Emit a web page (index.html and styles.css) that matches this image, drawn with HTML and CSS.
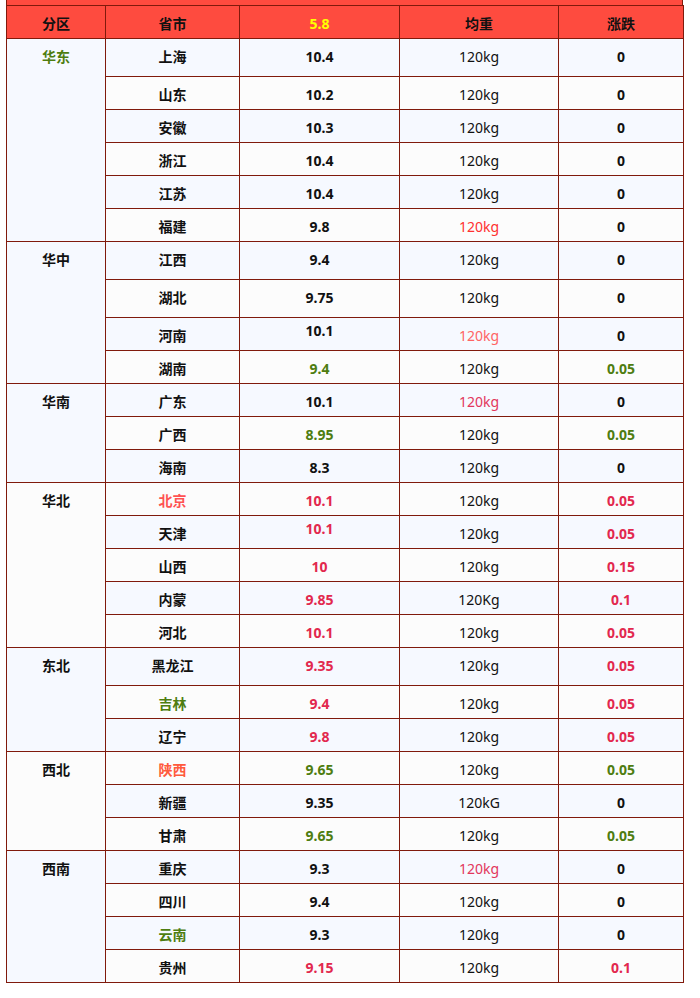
FILE: index.html
```html
<!DOCTYPE html>
<html lang="zh">
<head>
<meta charset="utf-8">
<title>价格表</title>
<link rel="stylesheet" href="styles.css">
</head>
<body>
<div class="wrap">
  <div class="top-band"></div>
  <table class="price">
    <colgroup>
      <col class="c1"><col class="c2"><col class="c3"><col class="c4"><col class="c5">
    </colgroup>
    <thead>
      <tr class="head">
        <th>分区</th><th>省市</th><th class="yellow">5.8</th><th>均重</th><th>涨跌</th>
      </tr>
    </thead>
    <tbody>
      <tr class="tall"><td class="region green" rowspan="6">华东</td><td>上海</td><td>10.4</td><td class="w">120kg</td><td>0</td></tr>
      <tr><td>山东</td><td>10.2</td><td class="w">120kg</td><td>0</td></tr>
      <tr><td>安徽</td><td>10.3</td><td class="w">120kg</td><td>0</td></tr>
      <tr><td>浙江</td><td>10.4</td><td class="w">120kg</td><td>0</td></tr>
      <tr><td>江苏</td><td>10.4</td><td class="w">120kg</td><td>0</td></tr>
      <tr><td>福建</td><td>9.8</td><td class="w red-kg">120kg</td><td>0</td></tr>

      <tr class="tall"><td class="region" rowspan="4">华中</td><td>江西</td><td>9.4</td><td class="w">120kg</td><td>0</td></tr>
      <tr class="tall"><td>湖北</td><td>9.75</td><td class="w">120kg</td><td>0</td></tr>
      <tr><td>河南</td><td class="up">10.1</td><td class="w salmon">120kg</td><td>0</td></tr>
      <tr><td>湖南</td><td class="green">9.4</td><td class="w">120kg</td><td class="green">0.05</td></tr>

      <tr><td class="region" rowspan="3">华南</td><td>广东</td><td>10.1</td><td class="w pink">120kg</td><td>0</td></tr>
      <tr><td>广西</td><td class="green">8.95</td><td class="w">120kg</td><td class="green">0.05</td></tr>
      <tr><td>海南</td><td>8.3</td><td class="w">120kg</td><td>0</td></tr>

      <tr><td class="region" rowspan="5">华北</td><td class="salmon">北京</td><td class="crimson">10.1</td><td class="w">120kg</td><td class="crimson">0.05</td></tr>
      <tr><td>天津</td><td class="crimson up">10.1</td><td class="w">120kg</td><td class="crimson">0.05</td></tr>
      <tr><td>山西</td><td class="crimson">10</td><td class="w">120kg</td><td class="crimson">0.15</td></tr>
      <tr><td>内蒙</td><td class="crimson">9.85</td><td class="w">120Kg</td><td class="crimson">0.1</td></tr>
      <tr><td>河北</td><td class="crimson">10.1</td><td class="w">120kg</td><td class="crimson">0.05</td></tr>

      <tr class="tall"><td class="region" rowspan="3">东北</td><td>黑龙江</td><td class="crimson">9.35</td><td class="w">120kg</td><td class="crimson">0.05</td></tr>
      <tr><td class="green">吉林</td><td class="crimson">9.4</td><td class="w">120kg</td><td class="crimson">0.05</td></tr>
      <tr><td>辽宁</td><td class="crimson">9.8</td><td class="w">120kg</td><td class="crimson">0.05</td></tr>

      <tr><td class="region" rowspan="3">西北</td><td class="orange">陕西</td><td class="green">9.65</td><td class="w">120kg</td><td class="green">0.05</td></tr>
      <tr><td>新疆</td><td>9.35</td><td class="w">120kG</td><td>0</td></tr>
      <tr><td>甘肃</td><td class="green">9.65</td><td class="w">120kg</td><td class="green">0.05</td></tr>

      <tr><td class="region" rowspan="4">西南</td><td>重庆</td><td>9.3</td><td class="w pink">120kg</td><td>0</td></tr>
      <tr><td>四川</td><td>9.4</td><td class="w">120kg</td><td>0</td></tr>
      <tr><td class="green">云南</td><td>9.3</td><td class="w">120kg</td><td>0</td></tr>
      <tr><td>贵州</td><td class="crimson">9.15</td><td class="w">120kg</td><td class="crimson">0.1</td></tr>
    </tbody>
  </table>
</div>
</body>
</html>
```

FILE: styles.css
```css
html, body {
  margin: 0;
  padding: 0;
  background: #ffffff;
}

.wrap {
  padding-left: 6px;
  font-family: "Noto Sans", "Noto Sans CJK SC", sans-serif;
}

.top-band {
  width: 675px;
  height: 5px;
  background: #fe4b3f;
  border-left: 1px solid #801a0c;
  border-right: 1px solid #801a0c;
}

.price {
  width: 677px;
  border-collapse: collapse;
  table-layout: fixed;
  font-size: 14px;
  color: #111111;
}

.c1 { width: 99px; }
.c2 { width: 134px; }
.c3 { width: 160px; }
.c4 { width: 159px; }
.c5 { width: 125px; }

.price th,
.price td {
  border: 1px solid #801a0c;
  text-align: center;
  vertical-align: top;
  padding: 8px 0 0;
  line-height: 20px;
  font-weight: 700;
}

.price tr {
  height: 33px;
}

.price tr.tall {
  height: 38px;
}

.head {
  background: #fe4b3f;
}

.head th {
  color: #111111;
}

.head th.yellow {
  color: #ffff00;
}

.price tbody tr:nth-child(odd) {
  background: #f6f9ff;
}

.price tbody tr:nth-child(even) {
  background: #fcfcfc;
}

.price td.w {
  font-weight: 400;
}

.price td.up {
  padding-top: 3px;
}

.green { color: #4e7d10; }
.crimson { color: #e2284e; }
.salmon { color: #ff5252; }
.orange { color: #ff5a3c; }
.red-kg { color: #ff3030; }
.pink { color: #e2365c; }
.price td.salmon.w { color: #ff6464; }
```
